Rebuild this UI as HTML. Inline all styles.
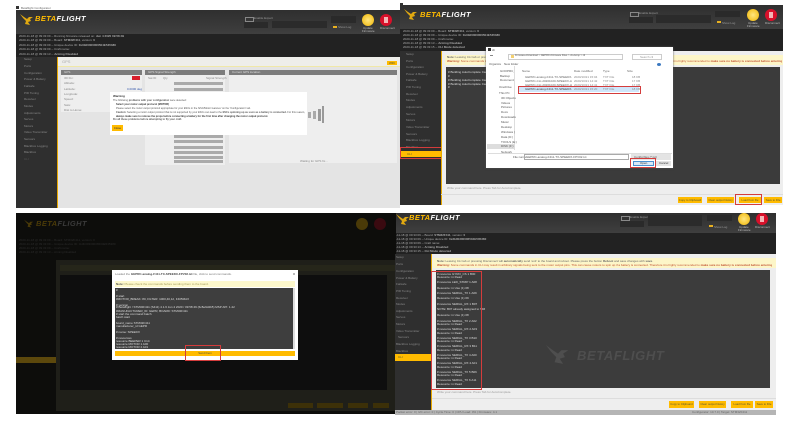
<!DOCTYPE html>
<html><head><meta charset="utf-8"><style>
html,body{margin:0;padding:0;background:#fff}
#p{position:relative;width:789px;height:424px;overflow:hidden;background:#fff;filter:blur(.35px);font-family:"Liberation Sans","Noto Sans CJK SC",sans-serif}
#p div,#p svg{position:absolute}
.t{font-size:3px;line-height:4px;white-space:nowrap;color:#888}
.m{font-size:2.55px}
.b{font-weight:bold}
.hd{background:linear-gradient(#2f2f2f,#3f3f3f)}
.lg{background:#222}
.sd{background:#2f2f2f}
.log{color:#aaa}
.logo{font:italic bold 7.5px/8px "Liberation Sans",sans-serif;white-space:nowrap;color:#fff;letter-spacing:.4px}
.logo span{color:#ffbb00}
.btn{background:#ffbb00;color:#553;font-size:2.8px;line-height:6px;text-align:center;white-space:nowrap}
.red{border:1px solid #d43c3c;box-sizing:border-box}
.bar{background:#aaa}
.w{color:#ddd}
.fn{width:47px;overflow:hidden}
</style></head><body><div id="p">
<svg width="0" height="0"><symbol id="bird" viewBox="0 0 14 11"><path d="M0 0 L4 3 L7 5 L9 3 L13 3 L10 5 L11 7 L8 8 L10 11 L5 10 L6 7 L3 4Z" fill="currentColor"/></symbol></svg>

<!-- PANEL 1 -->
<div style="left:16px;top:6px;width:3px;height:3px;background:#333"></div>
<div class="t" style="left:21px;top:6px;color:#666">Betaflight Configurator</div>
<div class="hd" style="left:16px;top:10px;width:384px;height:24px"></div>
<svg style="left:20px;top:14px;color:#e0a810" width="14" height="11"><use href="#bird"/></svg>
<div class="logo" style="left:35px;top:15px"><span>BETA</span>FLIGHT</div>
<div style="left:245px;top:17px;width:7px;height:3px;border:.5px solid #888"></div>
<div class="t" style="left:254px;top:16px;color:#999">Enable Expert</div>
<div style="left:244px;top:22px;width:24px;height:6px;background:#2a2a2a"></div>
<div style="left:272px;top:21px;width:55px;height:7px;background:#2b2b2b"></div>
<div style="left:331px;top:16px;width:25px;height:7px;background:#2a2a2a"></div>
<div style="left:333px;top:26px;width:4px;height:2px;background:#e8b020"></div>
<div class="t" style="left:338px;top:25px;color:#999">Show Log</div>
<div style="left:362px;top:14px;width:12px;height:12px;border-radius:50%;background:radial-gradient(#ffe680,#f0b400)"></div>
<div class="t" style="left:363px;top:26px;color:#bbb">Update</div>
<div class="t" style="left:362px;top:29px;color:#bbb">Firmware</div>
<div style="left:380px;top:14px;width:12px;height:12px;border-radius:50%;background:#d8102a"></div>
<div style="left:384px;top:17px;width:4px;height:6px;background:#f3b5b5"></div>
<div class="t" style="left:380px;top:26px;color:#bbb">Disconnect</div>
<div class="lg" style="left:16px;top:34px;width:384px;height:23px"></div>
<div class="t log" style="left:19px;top:34px">2020-11-18 @ 09:33:09 -- Running firmware released on: <b>Jun 4 2020 09:58:49</b></div>
<div class="t log" style="left:19px;top:38px">2020-11-18 @ 09:33:09 -- Board: <b>STM32F411</b>, version: <b>0</b></div>
<div class="t log" style="left:19px;top:43px">2020-11-18 @ 09:33:09 -- Unique device ID: <b>0x3b00300006504E535380</b></div>
<div class="t log" style="left:19px;top:47px">2020-11-18 @ 09:33:09 -- Craft name:</div>
<div class="t log" style="left:19px;top:52px">2020-11-18 @ 09:33:13 -- <b>Arming Disabled</b></div>
<div class="sd" style="left:16px;top:57px;width:41px;height:151px"></div>
<div class="t" style="left:24px;top:57px">Setup</div>
<div class="t" style="left:24px;top:64px">Ports</div>
<div class="t" style="left:24px;top:71px">Configuration</div>
<div class="t" style="left:24px;top:77px">Power &amp; Battery</div>
<div class="t" style="left:24px;top:84px">Failsafe</div>
<div class="t" style="left:24px;top:91px">PID Tuning</div>
<div class="t" style="left:24px;top:97px">Receiver</div>
<div class="t" style="left:24px;top:104px">Modes</div>
<div class="t" style="left:24px;top:111px">Adjustments</div>
<div class="t" style="left:24px;top:117px">Servos</div>
<div class="t" style="left:24px;top:124px">Motors</div>
<div class="t" style="left:24px;top:130px">Video Transmitter</div>
<div class="t" style="left:24px;top:137px">Sensors</div>
<div class="t" style="left:24px;top:144px">Blackbox Logging</div>
<div class="t" style="left:24px;top:150px">Blackbox</div>
<div class="t" style="left:24px;top:157px;color:#555">CLI</div>
<div style="left:57px;top:57px;width:343px;height:151px;background:#e4e4e4;border-left:1px solid #e8a800;box-sizing:border-box"></div>
<div style="left:58px;top:57px;width:342px;height:10px;background:#eeeeea;border-bottom:1px solid #f0e8a8;box-sizing:border-box"></div>
<div class="t" style="left:62px;top:60px;font-size:4px;color:#aaa">GPS</div>
<div class="btn" style="left:387px;top:61px;width:10px;height:4px;line-height:4px">WIKI</div>
<div style="left:61px;top:70px;width:81px;height:42px;background:#eee"></div>
<div style="left:61px;top:70px;width:81px;height:5px;background:#7c7c7c"></div>
<div class="t w" style="left:64px;top:70px">GPS</div>
<div class="t" style="left:64px;top:76px">3D Fix:</div><div style="left:132px;top:76px;width:8px;height:4px;background:#d81e2c"></div>
<div class="t" style="left:64px;top:81px">Altitude:</div>
<div class="t" style="left:64px;top:87px">Latitude:</div><div class="t" style="left:127px;top:87px;color:#3355aa">0.0000 deg</div>
<div class="t" style="left:64px;top:92px">Longitude:</div>
<div class="t" style="left:64px;top:97px">Speed:</div>
<div class="t" style="left:64px;top:103px">Sats:</div>
<div class="t" style="left:64px;top:108px">Dist to Home:</div>
<div style="left:145px;top:70px;width:80px;height:95px;background:#eee"></div>
<div style="left:145px;top:70px;width:80px;height:5px;background:#7c7c7c"></div>
<div class="t w" style="left:148px;top:70px">GPS Signal Strength</div>
<div class="t" style="left:148px;top:76px">Sat ID</div><div class="t" style="left:163px;top:76px">Qty</div><div class="t" style="left:206px;top:76px">Signal Strength</div>
<div class="bar" style="left:174px;top:82px;width:49px;height:3px"></div>
<div class="bar" style="left:174px;top:88px;width:49px;height:3px"></div>
<div class="bar" style="left:174px;top:135px;width:49px;height:3px"></div>
<div class="bar" style="left:174px;top:140px;width:49px;height:3px"></div>
<div class="bar" style="left:174px;top:146px;width:49px;height:3px"></div>
<div class="bar" style="left:174px;top:151px;width:49px;height:3px"></div>
<div class="bar" style="left:174px;top:156px;width:49px;height:3px"></div>
<div class="bar" style="left:174px;top:160px;width:49px;height:3px"></div>
<div style="left:229px;top:70px;width:168px;height:93px;background:#eee"></div>
<div style="left:229px;top:70px;width:168px;height:5px;background:#7c7c7c"></div>
<div class="t w" style="left:232px;top:70px">Current GPS location</div>
<div style="left:308px;top:112px;width:3px;height:6px;background:#aaa"></div>
<div style="left:313px;top:111px;width:3px;height:8px;background:#aaa"></div>
<div style="left:318px;top:109px;width:3px;height:12px;background:#999"></div>
<div style="left:322px;top:106px;width:2px;height:17px;background:#999"></div>
<div class="t" style="left:300px;top:159px">Waiting for GPS fix...</div>
<div style="left:110px;top:92px;width:197px;height:43px;background:#fff"></div>
<div class="t b" style="left:113px;top:94px;color:#333">Warning</div>
<div class="t m" style="left:113px;top:99px;color:#555">The following <b>problems with your configuration</b> were detected:</div>
<div class="t b m" style="left:116px;top:103px;color:#333">Select your motor output protocol (MOTOR)</div>
<div class="t m" style="left:116px;top:107px;color:#555">Please select the motor output protocol appropriate for your ESCs in the 'ESC/Motor features' on the 'Configuration' tab.</div>
<div class="t m" style="left:116px;top:111px;color:#555"><b>Caution:</b> Selecting a motor output protocol that is not supported by your ESCs can lead to the <b>ESCs spinning up as soon as a battery is connected.</b> For this reason,</div>
<div class="t b m" style="left:116px;top:115px;color:#333">always make sure to remove the props before connecting a battery for the first time after changing the motor output protocol.</div>
<div class="t m" style="left:113px;top:118px;color:#555"><b>Fix all these problems before attempting to fly your craft.</b></div>
<div class="btn" style="left:112px;top:125px;width:11px;height:6px;color:#333">Close</div>

<!-- PANEL 2 -->
<div style="left:400px;top:3px;width:3px;height:2px;background:#333"></div>
<div class="hd" style="left:400px;top:5px;width:383px;height:24px"></div>
<svg style="left:404px;top:9px;color:#e0a810" width="14" height="11"><use href="#bird"/></svg>
<div class="logo" style="left:420px;top:11px"><span>BETA</span>FLIGHT</div>
<div style="left:630px;top:12px;width:7px;height:3px;border:.5px solid #888"></div>
<div class="t" style="left:639px;top:11px;color:#999">Enable Expert</div>
<div style="left:629px;top:17px;width:24px;height:6px;background:#2a2a2a"></div>
<div style="left:656px;top:15px;width:55px;height:8px;background:#2b2b2b"></div>
<div style="left:715px;top:11px;width:25px;height:6px;background:#2a2a2a"></div>
<div style="left:717px;top:21px;width:4px;height:2px;background:#e8b020"></div>
<div class="t" style="left:722px;top:21px;color:#999">Show Log</div>
<div style="left:747px;top:9px;width:12px;height:12px;border-radius:50%;background:radial-gradient(#ffe680,#f0b400)"></div>
<div class="t" style="left:748px;top:21px;color:#bbb">Update</div>
<div class="t" style="left:747px;top:24px;color:#bbb">Firmware</div>
<div style="left:765px;top:9px;width:12px;height:12px;border-radius:50%;background:#d8102a"></div>
<div style="left:769px;top:12px;width:4px;height:6px;background:#f3b5b5"></div>
<div class="t" style="left:765px;top:21px;color:#bbb">Disconnect</div>
<div class="lg" style="left:400px;top:29px;width:383px;height:22px"></div>
<div class="t log" style="left:403px;top:29px">2020-11-18 @ 09:33:09 -- Board: <b>STM32F411</b>, version: <b>0</b></div>
<div class="t log" style="left:403px;top:33px">2020-11-18 @ 09:33:09 -- Unique device ID: <b>0x3b00300006504E535380</b></div>
<div class="t log" style="left:403px;top:37px">2020-11-18 @ 09:33:09 -- Craft name:</div>
<div class="t log" style="left:403px;top:41px">2020-11-18 @ 09:33:13 -- <b>Arming Disabled</b></div>
<div class="t log" style="left:403px;top:45px">2020-11-18 @ 09:33:15 -- <b>CLI Mode detected</b></div>
<div class="sd" style="left:400px;top:51px;width:41px;height:154px"></div>
<div class="t" style="left:406px;top:52px">Setup</div>
<div class="t" style="left:406px;top:59px">Ports</div>
<div class="t" style="left:406px;top:65px">Configuration</div>
<div class="t" style="left:406px;top:72px">Power &amp; Battery</div>
<div class="t" style="left:406px;top:78px">Failsafe</div>
<div class="t" style="left:406px;top:85px">PID Tuning</div>
<div class="t" style="left:406px;top:92px">Receiver</div>
<div class="t" style="left:406px;top:98px">Modes</div>
<div class="t" style="left:406px;top:105px">Adjustments</div>
<div class="t" style="left:406px;top:112px">Servos</div>
<div class="t" style="left:406px;top:118px">Motors</div>
<div class="t" style="left:406px;top:125px">Video Transmitter</div>
<div class="t" style="left:406px;top:132px">Sensors</div>
<div class="t" style="left:406px;top:138px">Blackbox Logging</div>
<div class="t" style="left:406px;top:145px">Blackbox</div>
<div style="left:401px;top:151px;width:40px;height:6px;background:#ffbb00"></div>
<div class="t" style="left:407px;top:152px;color:#553">CLI</div>
<div class="red" style="left:400px;top:147px;width:45px;height:12px"></div>
<div style="left:441px;top:51px;width:342px;height:154px;background:#eee;border-left:1px solid #e8a800;box-sizing:border-box"></div>
<div style="left:445px;top:55px;width:338px;height:10px;background:#fdf6c8"></div>
<div class="t" style="left:447px;top:55px;color:#666"><b>Note:</b> Leaving CLI tab or pressing Disconnect will <b>automatically</b> send 'exit' to the board.</div>
<div class="t" style="left:447px;top:59px;color:#c05030;width:335px;overflow:hidden"><b>Warning:</b> Some commands in CLI may result in arbitrary signals being sent to the motor output pins. This can cause motors to spin up if a battery is connected. Therefore it is highly recommended to <b>make sure no battery is connected before entering commands in CLI.</b></div>
<div style="left:446px;top:67px;width:334px;height:117px;background:#3b3b3b"></div>
<div class="t w" style="left:448px;top:70px"># Building AutoComplete Cache</div>
<div class="t w" style="left:448px;top:74px">#</div>
<div class="t w" style="left:448px;top:78px"># Building AutoComplete Cache</div>
<div class="t w" style="left:448px;top:82px"># Building AutoComplete Cache</div>
<div class="t w" style="left:448px;top:85px">#</div>
<div class="t" style="left:447px;top:186px;color:#999">Write your command here. Press Tab for AutoComplete.</div>
<div style="left:441px;top:194px;width:342px;height:1px;background:#ddd"></div>
<div class="btn" style="left:678px;top:197px;width:24px;height:6px">Copy to Clipboard</div>
<div class="btn" style="left:707px;top:197px;width:27px;height:6px">Clear output history</div>
<div class="btn" style="left:739px;top:197px;width:22px;height:6px">Load from file</div>
<div class="btn" style="left:764px;top:197px;width:18px;height:6px">Save to File</div>
<div class="red" style="left:735px;top:194px;width:27px;height:11px"></div>
<!-- file dialog -->
<div style="left:486px;top:47px;width:187px;height:121px;background:#fff;box-shadow:0 0 2px #555"></div>
<div style="left:488px;top:48px;width:3px;height:3px;background:#333"></div>
<div class="t" style="left:492px;top:48px;color:#444">cli</div>
<div style="left:490px;top:55px;width:3px;height:1px;background:#888"></div>
<div style="left:508px;top:54px;width:115px;height:6px;border:.5px solid #ccc;box-sizing:border-box"></div>
<div style="left:511px;top:55px;width:3px;height:3px;background:#f3d070"></div>
<div class="t m" style="left:515px;top:54px;color:#555">Firmware-Download &gt; GEPRC-Firmware Files &gt; cli-dump &gt; cli</div>
<div style="left:632px;top:54px;width:30px;height:6px;border:.5px solid #ccc;box-sizing:border-box"></div>
<div class="t" style="left:640px;top:55px;color:#999">Search cli</div>
<div class="t" style="left:489px;top:62px;color:#555">Organize</div><div class="t" style="left:504px;top:62px;color:#555">New folder</div>
<div style="left:657px;top:63px;width:4px;height:3px;background:#3a78c0;border-radius:50%"></div>
<div style="left:514px;top:66px;width:.6px;height:84px;background:#ddd"></div>
<div class="t" style="left:500px;top:69px;color:#555;width:14px;overflow:hidden">GOOPRC_F405</div>
<div class="t" style="left:500px;top:74px;color:#555">Backup</div>
<div class="t" style="left:500px;top:78px;color:#555;width:14px;overflow:hidden">Documents</div>
<div class="t" style="left:499px;top:85px;color:#555">OneDrive</div>
<div class="t" style="left:499px;top:91px;color:#555">This PC</div>
<div class="t" style="left:501px;top:96px;color:#555">3D Objects</div>
<div class="t" style="left:501px;top:101px;color:#555">Videos</div>
<div class="t" style="left:501px;top:105px;color:#555">Pictures</div>
<div class="t" style="left:501px;top:110px;color:#555">Docs</div>
<div class="t" style="left:501px;top:115px;color:#555">Downloads</div>
<div class="t" style="left:501px;top:120px;color:#555">Music</div>
<div class="t" style="left:501px;top:125px;color:#555">Desktop</div>
<div class="t" style="left:501px;top:130px;color:#555;width:14px;overflow:hidden">Windows (C:)</div>
<div class="t" style="left:501px;top:135px;color:#555">Data (D:)</div>
<div class="t" style="left:501px;top:140px;color:#555">TOOLS (E:)</div>
<div style="left:487px;top:144px;width:27px;height:5px;background:#ddd"></div>
<div class="t" style="left:501px;top:144px;color:#555">DISK (F:)</div>
<div class="t" style="left:501px;top:150px;color:#555">Network</div>
<div class="t" style="left:522px;top:69px;color:#666">Name</div><div class="t" style="left:574px;top:69px;color:#666">Date modified</div><div class="t" style="left:603px;top:69px;color:#666">Type</div><div class="t" style="left:627px;top:69px;color:#666">Size</div>
<div style="left:519px;top:86px;width:120px;height:6px;background:#cfe6fa"></div>
<div class="t fn" style="left:525px;top:75px;color:#666">GEPRC-analog-F411-TX-SPEEDX-FPV01.txt</div><div class="t" style="left:574px;top:75px;color:#888">2020/10/21 15:04</div><div class="t" style="left:603px;top:75px;color:#888">TXT File</div><div class="t" style="left:632px;top:75px;color:#888">18 KB</div>
<div class="t fn" style="left:525px;top:79px;color:#666">GEPRC-CLI-20201020-SPEEDX-ANALOG.txt</div><div class="t" style="left:574px;top:79px;color:#888">2020/10/21 14:42</div><div class="t" style="left:603px;top:79px;color:#888">TXT File</div><div class="t" style="left:632px;top:79px;color:#888">17 KB</div>
<div class="t fn" style="left:525px;top:83px;color:#666">GEPRC-CLI-20201020-SPEEDX-HD-F411.txt</div><div class="t" style="left:574px;top:83px;color:#888">2020/10/21 14:41</div><div class="t" style="left:603px;top:83px;color:#888">TXT File</div><div class="t" style="left:632px;top:83px;color:#888">17 KB</div>
<div class="t fn" style="left:525px;top:87px;color:#444">GEPRC-analog-F411-TX-SPEEDX-FPV02.txt</div><div class="t" style="left:574px;top:87px;color:#888">2020/10/21 15:20</div><div class="t" style="left:603px;top:87px;color:#888">TXT File</div><div class="t" style="left:632px;top:87px;color:#888">18 KB</div>
<div class="red" style="left:518px;top:86px;width:123px;height:8px"></div>
<div style="left:488px;top:153px;width:184px;height:.6px;background:#ddd"></div>
<div class="t" style="left:513px;top:155px;color:#555">File name:</div>
<div style="left:524px;top:154px;width:105px;height:6px;border:.5px solid #aaa;box-sizing:border-box"></div>
<div class="t" style="left:526px;top:155px;color:#555">GEPRC-analog-F411-TX-SPEEDX-FPV02.txt</div>
<div style="left:631px;top:154px;width:40px;height:6px;background:#e4e4e4"></div>
<div class="t" style="left:634px;top:155px;color:#555">Config files (*.txt)</div>
<div style="left:633px;top:161px;width:21px;height:5px;background:#d9e8f7;border:.5px solid #4a90d0;box-sizing:border-box"></div>
<div class="t" style="left:640px;top:161px;color:#333">Open</div>
<div style="left:656px;top:161px;width:15px;height:5px;background:#e4e4e4"></div>
<div class="t" style="left:659px;top:161px;color:#333">Cancel</div>
<div class="red" style="left:630px;top:158px;width:26px;height:10px"></div>

<!-- PANEL 3 -->
<div style="left:16px;top:213px;width:380px;height:201px;background:#0d0d0b"></div>
<svg style="left:24px;top:219px;color:#4a3a08" width="10" height="9"><use href="#bird"/></svg>
<div class="logo" style="left:36px;top:220px;color:#3a3a3a"><span style="color:#4a3a08">BETA</span>FLIGHT</div>
<div class="t" style="left:19px;top:238px;color:#2c2c2c">2020-11-18 @ 09:33:09 -- Board: STM32F411, version: 0</div>
<div class="t" style="left:19px;top:242px;color:#2c2c2c">2020-11-18 @ 09:33:09 -- Unique device ID: 0x3b00300006504E535380</div>
<div class="t" style="left:19px;top:246px;color:#2c2c2c">2020-11-18 @ 09:33:09 -- Craft name:</div>
<div class="t" style="left:19px;top:250px;color:#2c2c2c">2020-11-18 @ 09:33:13 -- Arming Disabled</div>
<div style="left:56px;top:260px;width:340px;height:151px;background:#1f1f19"></div>
<div style="left:16px;top:357px;width:40px;height:6px;background:#5c480c"></div>
<div style="left:60px;top:265px;width:336px;height:6px;background:#26261a"></div>
<div style="left:60px;top:275px;width:327px;height:115px;background:#0e0e0e"></div>
<div style="left:356px;top:218px;width:12px;height:12px;border-radius:50%;background:#4a3a08"></div>
<div style="left:374px;top:218px;width:12px;height:12px;border-radius:50%;background:#3a0a10"></div>
<div style="left:288px;top:403px;width:25px;height:5px;background:#3c3008"></div>
<div style="left:317px;top:403px;width:26px;height:5px;background:#3c3008"></div>
<div style="left:348px;top:403px;width:20px;height:5px;background:#3c3008"></div>
<div style="left:373px;top:403px;width:16px;height:5px;background:#3c3008"></div>
<div style="left:112px;top:270px;width:186px;height:90px;background:#fff"></div>
<div class="t" style="left:115px;top:272px;color:#777">Loaded the <b style="color:#444">GEPRC-analog-F411-TX-SPEEDX-FPV02.txt</b> file, click to send commands.</div>
<div style="left:293px;top:273px;width:2px;height:2px;background:#bbb"></div>
<div style="left:115px;top:281px;width:180px;height:6px;background:#fdf8cc"></div>
<div class="t" style="left:116px;top:282px;color:#a8a060"><b style="color:#555">Note:</b> Please check the commands before sending them to the board.</div>
<div style="left:115px;top:288px;width:179px;height:61px;background:#3e3e3e"></div>
<div style="left:293px;top:288px;width:2px;height:61px;background:#ddd"></div>
<div class="t w" style="left:116px;top:288px">#</div>
<div class="t w" style="left:116px;top:294px"># start</div>
<div class="t w" style="left:116px;top:297px">#MOTOR_BREAK: 80, FILTER: 1000,40,12, F405MAX</div>
<div class="t w" style="left:116px;top:303px"># version</div>
<div class="t w" style="left:116px;top:305px"># Betaflight / STM32F411 (S411) 4.1.6 Jun 4 2020 / 09:58:49 (6c8e9d2b5) MSP API: 1.42</div>
<div class="t w" style="left:116px;top:309px">#MANUFACTURER_ID: GEPR, BOARD: STM32F411</div>
<div class="t w" style="left:116px;top:312px"># start the command batch</div>
<div class="t w" style="left:116px;top:315px">batch start</div>
<div class="t w" style="left:116px;top:321px">board_name STM32F411</div>
<div class="t w" style="left:116px;top:324px">manufacturer_id GEPR</div>
<div class="t w" style="left:116px;top:330px"># name: SPEEDX</div>
<div class="t w" style="left:116px;top:336px"># resources</div>
<div class="t w" style="left:116px;top:339px">resource BEEPER 1 C14</div>
<div class="t w" style="left:116px;top:342px">resource MOTOR 1 A00</div>
<div class="t w" style="left:116px;top:345px">resource MOTOR 2 A01</div>
<div class="btn" style="left:115px;top:351px;width:180px;height:5px;line-height:5px">Send them</div>
<div class="red" style="left:185px;top:345px;width:36px;height:16px"></div>

<!-- PANEL 4 -->
<div class="hd" style="left:396px;top:213px;width:380px;height:20px"></div>
<svg style="left:396px;top:214px;color:#e0a810" width="14" height="11"><use href="#bird"/></svg>
<div class="logo" style="left:409px;top:214px"><span>BETA</span>FLIGHT</div>
<div style="left:621px;top:216px;width:7px;height:3px;border:.5px solid #888"></div>
<div class="t" style="left:630px;top:215px;color:#999">Enable Expert</div>
<div style="left:620px;top:221px;width:24px;height:6px;background:#2a2a2a"></div>
<div style="left:648px;top:215px;width:54px;height:11px;background:#2b2b2b"></div>
<div style="left:707px;top:215px;width:25px;height:6px;background:#2a2a2a"></div>
<div style="left:709px;top:225px;width:4px;height:2px;background:#e8b020"></div>
<div class="t" style="left:714px;top:225px;color:#999">Show Log</div>
<div style="left:738px;top:213px;width:12px;height:12px;border-radius:50%;background:radial-gradient(#ffe680,#f0b400)"></div>
<div class="t" style="left:739px;top:225px;color:#bbb">Update</div>
<div class="t" style="left:738px;top:228px;color:#bbb">Firmware</div>
<div style="left:756px;top:213px;width:12px;height:12px;border-radius:50%;background:#d8102a"></div>
<div style="left:760px;top:216px;width:4px;height:6px;background:#f3b5b5"></div>
<div class="t" style="left:755px;top:225px;color:#bbb">Disconnect</div>
<div class="lg" style="left:396px;top:233px;width:380px;height:21px"></div>
<div class="t log" style="left:396px;top:233px">-11-18 @ 09:33:09 -- Board: <b>STM32F411</b>, version: <b>0</b></div>
<div class="t log" style="left:396px;top:237px">-11-18 @ 09:33:09 -- Unique device ID: <b>0x3b00300006504E535380</b></div>
<div class="t log" style="left:396px;top:241px">-11-18 @ 09:33:09 -- Craft name:</div>
<div class="t log" style="left:396px;top:245px">-11-18 @ 09:33:13 -- <b>Arming Disabled</b></div>
<div class="t log" style="left:396px;top:249px">-11-18 @ 09:33:15 -- <b>CLI Mode detected</b></div>
<div class="sd" style="left:395px;top:254px;width:37px;height:156px"></div>
<div class="t" style="left:396px;top:255px">Setup</div>
<div class="t" style="left:396px;top:262px">Ports</div>
<div class="t" style="left:396px;top:269px">Configuration</div>
<div class="t" style="left:396px;top:276px">Power &amp; Battery</div>
<div class="t" style="left:396px;top:282px">Failsafe</div>
<div class="t" style="left:396px;top:289px">PID Tuning</div>
<div class="t" style="left:396px;top:296px">Receiver</div>
<div class="t" style="left:396px;top:302px">Modes</div>
<div class="t" style="left:396px;top:309px">Adjustments</div>
<div class="t" style="left:396px;top:315px">Servos</div>
<div class="t" style="left:396px;top:322px">Motors</div>
<div class="t" style="left:396px;top:329px">Video Transmitter</div>
<div class="t" style="left:398px;top:335px">Sensors</div>
<div class="t" style="left:396px;top:342px">Blackbox Logging</div>
<div class="t" style="left:396px;top:349px">Blackbox</div>
<div style="left:395px;top:354px;width:36px;height:7px;background:#ffbb00"></div>
<div class="t" style="left:398px;top:355px;color:#553">CLI</div>
<div style="left:431px;top:254px;width:345px;height:156px;background:#eee;border-left:1px solid #e8a800;box-sizing:border-box"></div>
<div style="left:433px;top:258px;width:343px;height:10px;background:#fdf6c8"></div>
<div class="t" style="left:437px;top:259px;color:#666"><b>Note:</b> Leaving CLI tab or pressing Disconnect will <b>automatically</b> send 'exit' to the board and reboot. Please press the button <b>Reboot</b> and save changes with <b>save</b>.</div>
<div class="t" style="left:437px;top:263px;color:#c05030;width:335px;overflow:hidden"><b>Warning:</b> Some commands in CLI may result in arbitrary signals being sent to the motor output pins. This can cause motors to spin up if a battery is connected. Therefore it is highly recommended to <b>make sure no battery is connected before entering commands in CLI.</b></div>
<div style="left:436px;top:270px;width:334px;height:118px;background:#3c3c3c"></div>
<svg style="left:546px;top:345px;color:#4e4e4e" width="24" height="19"><use href="#bird"/></svg>
<div class="logo" style="left:577px;top:349px;font-size:13px;line-height:14px;color:#4e4e4e;letter-spacing:.6px"><span style="color:#4e4e4e">BETA</span>FLIGHT</div>
<div class="t w" style="left:437px;top:272px"># resource GYRO_CS 1 B00</div>
<div class="t w" style="left:437px;top:275px">Resource: in Read</div>
<div class="t w" style="left:437px;top:280px"># resource LED_STRIP 1 A08</div>
<div class="t w" style="left:437px;top:286px">Resource: in Use (1) 08</div>
<div class="t w" style="left:437px;top:291px"># resource SERIAL_TX 1 A09</div>
<div class="t w" style="left:437px;top:296px">Resource: in Use (1) 09</div>
<div class="t w" style="left:437px;top:302px"># resource SERIAL_RX 1 B07</div>
<div class="t w" style="left:437px;top:307px">NOTE: B07 already assigned to TIM</div>
<div class="t w" style="left:437px;top:313px">Resource: in Use (1) 08</div>
<div class="t w" style="left:437px;top:319px"># resource SERIAL_TX 2 A02</div>
<div class="t w" style="left:437px;top:322px">Resource: in Read</div>
<div class="t w" style="left:437px;top:327px"># resource SERIAL_RX 2 A03</div>
<div class="t w" style="left:437px;top:331px">Resource: in Read</div>
<div class="t w" style="left:437px;top:336px"># resource SERIAL_TX 3 B10</div>
<div class="t w" style="left:437px;top:339px">Resource: in Read</div>
<div class="t w" style="left:437px;top:344px"># resource SERIAL_RX 3 B11</div>
<div class="t w" style="left:437px;top:348px">Resource: in Read</div>
<div class="t w" style="left:437px;top:353px"># resource SERIAL_TX 4 A00</div>
<div class="t w" style="left:437px;top:356px">Resource: in Read</div>
<div class="t w" style="left:437px;top:361px"># resource SERIAL_RX 4 A01</div>
<div class="t w" style="left:437px;top:365px">Resource: in Read</div>
<div class="t w" style="left:437px;top:370px"># resource SERIAL_TX 5 B06</div>
<div class="t w" style="left:437px;top:373px">Resource: in Read</div>
<div class="t w" style="left:437px;top:378px"># resource SERIAL_TX 6 A11</div>
<div class="t w" style="left:437px;top:382px">Resource: in Read</div>
<div class="red" style="left:431px;top:271px;width:51px;height:119px"></div>
<div class="t" style="left:437px;top:390px;color:#999">Write your command here. Press Tab for AutoComplete.</div>
<div style="left:432px;top:398px;width:344px;height:1px;background:#ddd"></div>
<div class="btn" style="left:669px;top:401px;width:25px;height:7px;line-height:7px">Copy to Clipboard</div>
<div class="btn" style="left:699px;top:401px;width:27px;height:7px;line-height:7px">Clear output history</div>
<div class="btn" style="left:731px;top:401px;width:22px;height:7px;line-height:7px">Load from file</div>
<div class="btn" style="left:755px;top:401px;width:18px;height:7px;line-height:7px">Save to File</div>
<div style="left:395px;top:410px;width:381px;height:5px;background:#b5b5b5"></div>
<div class="t" style="left:396px;top:410px;color:#666">Packet error: 0 | I2C error: 0 | Cycle Time: 0 | CPU Load: 0% | Firmware: 4.1</div>
<div class="t" style="left:692px;top:410px;color:#666">Configurator: 10.7.0 | Target: STM32F411</div>
</div></body></html>
